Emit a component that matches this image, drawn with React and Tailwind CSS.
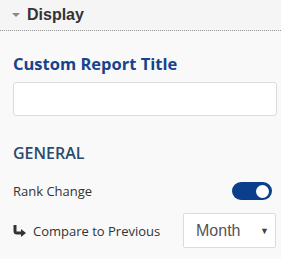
import React from 'react';

const App = () => {
    return (
        <div className="w-[281px] h-[259px] bg-[#f9f9f9] overflow-hidden" style={{ fontFamily: '"Open Sans", sans-serif' }}>
            <div className="h-[31px] bg-[#f5f5f5] border-b border-dotted border-[#999] flex items-center pl-[12px]">
                <span className="w-0 h-0 border-l-[4px] border-r-[4px] border-t-[4px] border-l-transparent border-r-transparent border-t-[#888] mr-[7px]"></span>
                <span className="text-[16px] font-bold text-[#333] leading-none" style={{ fontFamily: '"Liberation Sans", Arial, sans-serif' }}>Display</span>
            </div>

            <div className="pl-[13px] pr-[4px]">
                <h3 className="text-[16.5px] font-bold text-[#17428c] mt-[22px] leading-[22px]">Custom Report Title</h3>
                <input type="text" className="mt-[7px] w-[264px] h-[34px] bg-white border border-[#dcdcdc] rounded-[3px] block" />

                <h4 className="text-[16px] font-semibold text-[#2b4a6f] mt-[26px] leading-[22px]">GENERAL</h4>

                <div className="flex items-center justify-between mt-[18px] pr-[5px]">
                    <span className="text-[13px] text-[#333] leading-[18px]">Rank Change</span>
                    <span className="w-[40px] h-[18px] rounded-full bg-[#0b3f8b] flex items-center justify-end pr-[3px]">
                        <span className="w-[13px] h-[13px] rounded-full bg-white"></span>
                    </span>
                </div>

                <div className="flex items-center justify-between mt-[13px] pr-[1px]">
                    <div className="flex items-center">
                        <svg width="14" height="12" viewBox="0 0 14 12" className="mr-[6px]">
                            <path d="M2 0 V6 Q2 8 4 8 H9" fill="none" stroke="#333" strokeWidth="3" />
                            <path d="M8 4 L13 8 L8 12 Z" fill="#333" />
                        </svg>
                        <span className="text-[13px] text-[#333] leading-[18px]">Compare to Previous</span>
                    </div>
                    <div className="w-[93px] h-[35px] bg-white border border-[#dcdcdc] rounded-[2px] flex items-center pl-[12px] pr-[6px] justify-between">
                        <span className="text-[16px] text-[#555] leading-none" style={{ fontFamily: '"Liberation Sans", Arial, sans-serif' }}>Month</span>
                        <span className="text-[9px] text-[#444]">▼</span>
                    </div>
                </div>
            </div>
        </div>
    );
};

export default App;
